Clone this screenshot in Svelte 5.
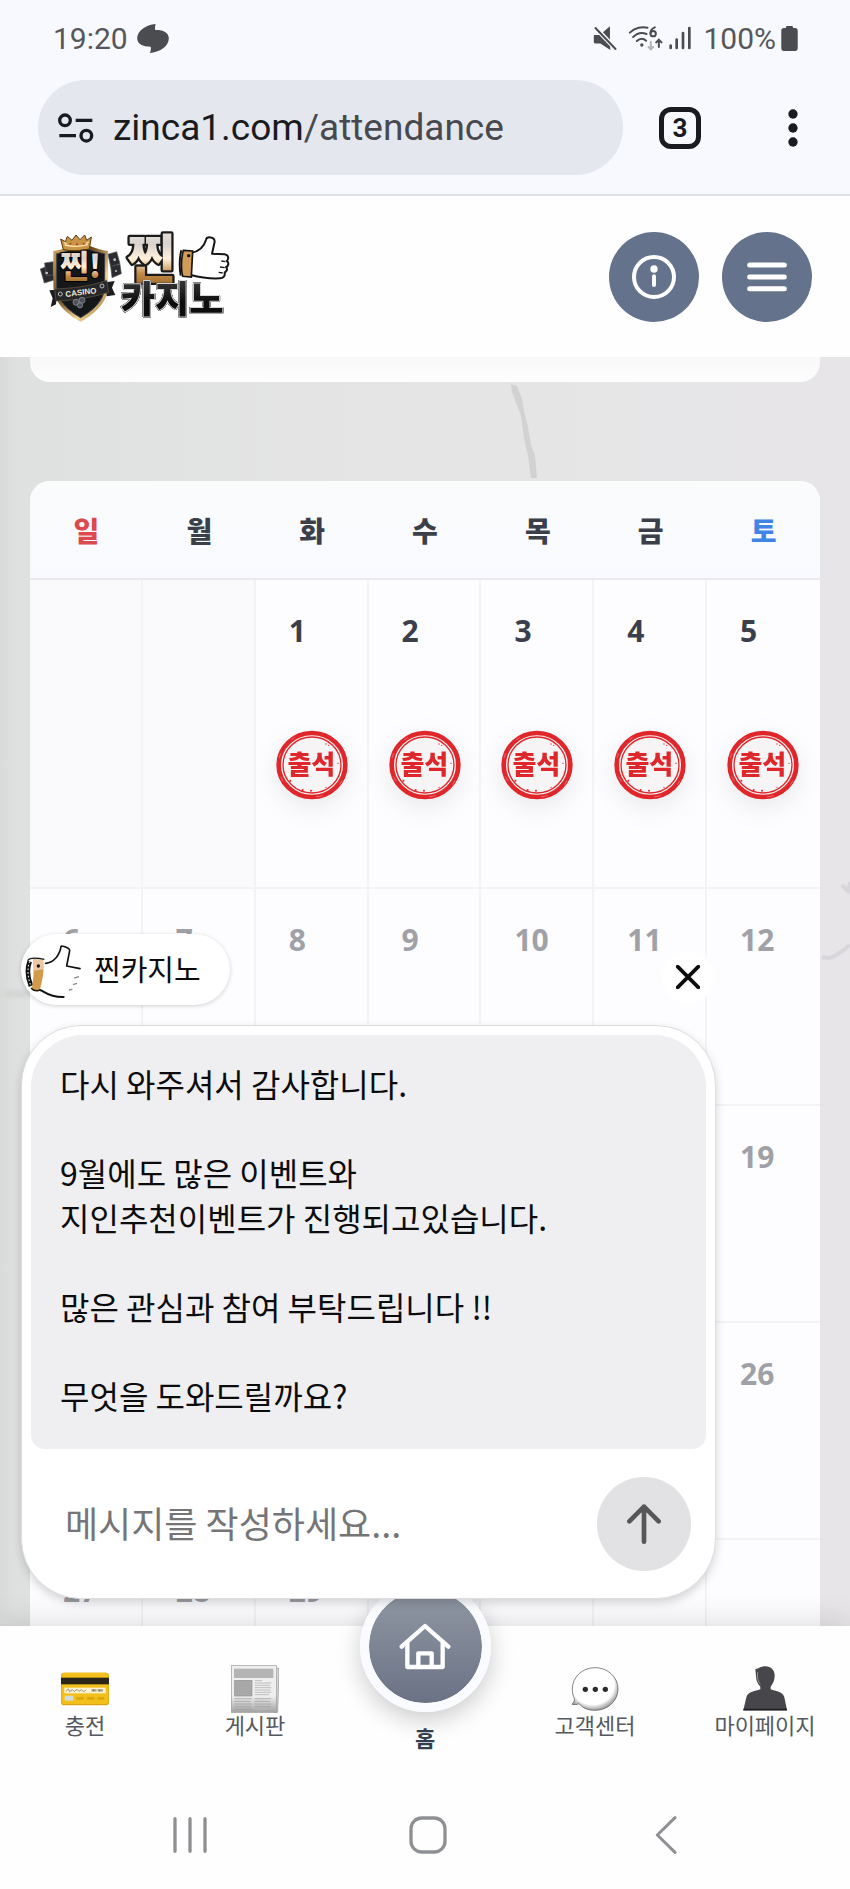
<script>
  const days = ['일', '월', '화', '수', '목', '금', '토']

  // null = blank day before the 1st / after the 30th
  const weeks = [
    [null, null, 1, 2, 3, 4, 5],
    [6, 7, 8, 9, 10, 11, 12],
    [13, 14, 15, 16, 17, 18, 19],
    [20, 21, 22, 23, 24, 25, 26],
    [27, 28, 29, 30, null, null, null]
  ]

  const checkedUntil = 5

  const messages = [
    ['다시 와주셔서 감사합니다.'],
    ['9월에도 많은 이벤트와', '지인추천이벤트가 진행되고있습니다.'],
    ['많은 관심과 참여 부탁드립니다 !!'],
    ['무엇을 도와드릴까요?']
  ]

  let open = true
  let draft = ''

  const closeChat = () => open = false
  const send = () => draft = ''
</script>

<div class="phone">
  <div class="status">
    <span class="clock">19:20</span>
    <svg class="blob" viewBox="0 0 96 88" width="32" height="29">
      <path d="M56 0c-2 8-3 13-1 18 22-1 39 6 41 24 1 26-28 44-58 46 4-8 4-13 3-19C17 69 1 61 0 45-1 22 25 2 56 0z" fill="#4a4c50" />
    </svg>
    <div class="status-right">
      <svg viewBox="0 0 72 76" width="24" height="25">
        <path d="M2 27h18L51 1v42L20 27l32 28v18L22 53H7c-4 0-5-2-5-6z" fill="#4a4c50" />
        <path d="M4 2l66 69" stroke="#f8f9ff" stroke-width="14" />
        <path d="M7 6l61 64" stroke="#4a4c50" stroke-width="6" stroke-linecap="round" />
      </svg>
      <svg class="wifi" viewBox="0 0 104 78" width="35" height="26">
        <g fill="none" stroke="#4a4c50" stroke-width="6" stroke-linecap="round">
          <path d="M5 23C20 8 42 4 58 8" />
          <path d="M15 36c11-11 26-15 40-9" />
          <path d="M26 48c9-8 20-8 28-1" />
          <path d="M80 7c-10 4-13 10-13 17" />
          <circle cx="75" cy="26" r="8" />
          <path d="M92 66V46M84 52l8-8 8 8" />
          <path d="M68 50v22M61 66l7 7 7-7" stroke="#b3b5ba" />
        </g>
        <circle cx="41" cy="60" r="5" fill="#4a4c50" />
      </svg>
      <svg class="signal" viewBox="0 0 66 70" width="22" height="24">
        <path d="M5 58v7M23 40v25M42 20v45M61 5v60" stroke="#4a4c50" stroke-width="8" stroke-linecap="round" />
      </svg>
      <span>100%</span>
      <svg class="battery" viewBox="0 0 50 76" width="17" height="25">
        <path d="M14 6c0-4 2-6 5-6h12c3 0 5 2 5 6h6c5 0 8 3 8 8v54c0 5-3 8-8 8H8c-5 0-8-3-8-8V14c0-5 3-8 8-8z" fill="#4a4c50" />
      </svg>
    </div>
  </div>

  <div class="browser">
    <div class="url">
      <svg viewBox="0 0 108 90" width="36" height="30" fill="none" stroke="#1a1b20" stroke-width="10">
        <circle cx="21" cy="22" r="16" />
        <path d="M53 22h50M4 68h50" />
        <circle cx="85" cy="68" r="16" />
      </svg>
      <span>zinca1.com<i>/attendance</i></span>
    </div>
    <button class="tabs" aria-label="탭">3</button>
    <button class="more" aria-label="메뉴">
      <svg viewBox="0 0 30 114" width="10" height="38" fill="#1a1b20">
        <circle cx="15" cy="15" r="14" />
        <circle cx="15" cy="57" r="14" />
        <circle cx="15" cy="99" r="14" />
      </svg>
    </button>
  </div>

  <header>
    <a href="/" class="logo" aria-label="찐카지노">
      <svg viewBox="54 0 576 384" width="192" height="128">
        <defs>
          <linearGradient id="gold" x1="0" y1="0" x2="0" y2="1">
            <stop offset="0" stop-color="#f4f0ec" />
            <stop offset=".35" stop-color="#d9d2cd" />
            <stop offset=".55" stop-color="#fff1dc" />
            <stop offset=".75" stop-color="#c08a45" />
            <stop offset="1" stop-color="#8e5b1f" />
          </linearGradient>
          <linearGradient id="rim" x1="0" y1="0" x2="1" y2="1">
            <stop offset="0" stop-color="#e0b46a" />
            <stop offset=".4" stop-color="#6b4718" />
            <stop offset=".7" stop-color="#f6d692" />
            <stop offset="1" stop-color="#7a521d" />
          </linearGradient>
          <linearGradient id="ink" x1="0" y1="0" x2="0" y2="1">
            <stop offset="0" stop-color="#4b4b4d" />
            <stop offset=".6" stop-color="#0d0d0e" />
          </linearGradient>
        </defs>
        <!-- cards behind the shield -->
        <g fill="#2a2b2f" stroke="#55565b" stroke-width="2">
          <path d="M61 168l30-12 14 44-32 10z" />
          <path d="M74 150l26-4v40l-22 2z" />
          <path d="M264 124l26-8 10 36-28 10z" />
          <path d="M272 160l28-6 4 28-28 12z" />
        </g>
        <g fill="#c9c9c9">
          <circle cx="80" cy="180" r="4" />
          <circle cx="284" cy="140" r="4" />
          <circle cx="288" cy="174" r="3" />
        </g>
        <!-- shield -->
        <path d="M182 84c-30 18-54 26-82 30v104c0 50 40 84 82 108 42-24 82-58 82-108V114c-28-4-52-12-82-30z" fill="url(#rim)" />
        <path d="M182 96c-26 15-48 22-72 26v98c0 42 34 72 72 94 38-22 72-52 72-94v-98c-24-4-46-11-72-26z" fill="#15171b" stroke="#41434a" stroke-width="3" />
        <path d="M122 78l14 8 6-16 14 12 12-16 12 14 14-14 6 16 14-10-6 36c-26 6-54 7-78 2z" fill="#c89445" stroke="#5b3a10" stroke-width="3" />
        <path d="M134 96c24 6 46 5 70-1M132 88l8 6M206 86l-8 6" fill="none" stroke="#fbe3ae" stroke-width="4" />
        <g fill="#a8402c">
          <circle cx="151" cy="92" r="3" />
          <circle cx="171" cy="94" r="3" />
          <circle cx="191" cy="92" r="3" />
        </g>
        <text x="120" y="196" class="badge">찐!</text>
        <path d="M88 232l24-2-4 44-16 8 6-26zM258 208l26-4-8 20 10 22-26 4z" fill="#1c1d20" />
        <path d="M104 228c54-2 104-8 156-26l6 36c-52 16-104 24-158 26z" fill="#26272b" stroke="#6b5a3c" stroke-width="2" />
        <text x="136" y="246" class="casino" transform="rotate(-7 184 236)">CASINO</text>
        <g fill="none" stroke="#bdbdbd" stroke-width="3">
          <circle cx="121" cy="243" r="6" />
          <circle cx="246" cy="219" r="6" />
        </g>
        <g fill="#4d5057" stroke="#9b9da3" stroke-width="2">
          <circle cx="168" cy="268" r="9" />
          <circle cx="186" cy="262" r="9" />
          <circle cx="180" cy="277" r="8" />
        </g>
        <!-- wordmark -->
        <text x="322" y="194" class="jjin">찐</text>
        <text x="302" y="300" class="kajino">카지노</text>
        <path d="M512 120c24-4 40-18 46-40 2-10 26-10 26 6l-8 36 38 2c14 2 12 16 6 20 8 4 6 16-2 18 6 6 2 14-4 16 2 10-4 18-14 18-38 2-58-2-88-10z" fill="#fff" stroke="#161616" stroke-width="6" stroke-linejoin="round" />
        <path d="M604 144l12 2M600 162l14 2M596 178l12 2" stroke="#161616" stroke-width="4" />
        <path d="M490 112l28 2-4 78-26-2c-6-26-4-54 2-78z" fill="#cf9c5a" stroke="#161616" stroke-width="5" />
        <path d="M484 112c-6 24-6 50-2 76" fill="none" stroke="#161616" stroke-width="6" />
        <circle cx="506" cy="128" r="5" fill="#161616" />
      </svg>
    </a>
    <button class="round" aria-label="안내">
      <svg viewBox="0 0 132 132" width="44" height="44">
        <circle cx="66" cy="66" r="60" fill="none" stroke="#fff" stroke-width="12" />
        <circle cx="66" cy="42" r="11" fill="#fff" />
        <path d="M66 64v26" stroke="#fff" stroke-width="12" stroke-linecap="round" />
      </svg>
    </button>
    <button class="round" aria-label="전체 메뉴">
      <svg viewBox="0 0 120 90" width="40" height="30">
        <path d="M8 9h104M8 45h104M8 80h104" stroke="#fff" stroke-width="15" stroke-linecap="round" />
      </svg>
    </button>
  </header>

  <main>
    <div class="scroll">
      <svg class="crack" viewBox="0 0 30 100" width="30" height="100">
        <path d="M1 1l6 2 5 13 2 12 4 16 3 18 4 10 2 23h-6l-3-22-4-18-3-22-6-16-3-8z" fill="#d2d2d2" />
      </svg>
      <svg class="vein" viewBox="0 0 30 90" width="30" height="90">
        <path d="M22 8l6 6 2-9M2 80c10 3 14-2 20-6l8-6" fill="none" stroke="#d8d6da" stroke-width="4" />
      </svg>
      <div class="smudge"></div>

      <section class="card-end"></section>

      <table>
        <thead>
          <tr>
            {#each days as day, i}
              <th class:sun={i === 0} class:sat={i === 6}>{day}</th>
            {/each}
          </tr>
        </thead>
        <tbody>
          {#each weeks as week, w}
            <tr class:stamped={w === 0}>
              {#each week as date}
                <td class:blank={w === 0 && !date} class:checked={date && date <= checkedUntil}>
                  {#if date}
                    <span class="date">{date}</span>
                    {#if date <= checkedUntil}
                      <svg class="stamp" viewBox="0 0 216 210" width="72" height="70">
                        <ellipse cx="108" cy="105" rx="100" ry="96" fill="#f6f4f4" stroke="#df262b" stroke-width="14" />
                        <ellipse cx="108" cy="105" rx="87" ry="84" fill="none" stroke="#df262b" stroke-width="4" />
                        <g fill="#df262b">
                          <circle cx="150" cy="42" r="2" />
                          <circle cx="158" cy="46" r="2" />
                          <circle cx="43" cy="152" r="3" />
                          <circle cx="80" cy="180" r="3" />
                          <circle cx="105" cy="182" r="3" />
                          <circle cx="150" cy="172" r="2" />
                          <circle cx="186" cy="100" r="2" />
                        </g>
                        <path d="M14 70l-5 14M14 140l8 14M198 152l-8 12M120 201l20-4M56 22l-10 8" stroke="#f08a8c" stroke-width="2" />
                        <text x="106" y="131" text-anchor="middle">출석</text>
                      </svg>
                    {/if}
                  {/if}
                </td>
              {/each}
            </tr>
          {/each}
        </tbody>
      </table>
    </div>

    {#if open}
      <div class="chat">
        <div class="chat-top">
          <div class="name">
            <svg viewBox="0 0 180 180" width="60" height="60">
              <path d="M62 70c24-2 40-22 46-50 2-6 28 0 26 8l-8 52 38 6c6 14 4 30-6 46-6 20-18 34-30 42-30 2-46-4-62-18z" fill="#fff" />
              <path d="M62 70c24-2 42-24 46-50 1-5 27 4 26 12l-9 46 40 8" fill="none" stroke="#111" stroke-width="5" stroke-linecap="round" stroke-linejoin="round" />
              <path d="M44 150c12 0 22 22 72 21" fill="none" stroke="#111" stroke-width="6" stroke-linecap="round" />
              <path d="M148 114l14-4M144 134l12-4M132 150l10-2" stroke="#888" stroke-width="4" />
              <path d="M14 64c-8 22-6 50 4 74" fill="none" stroke="#111" stroke-width="14" />
              <path d="M14 64c-8 22-6 50 4 74" fill="none" stroke="#fff" stroke-width="3" stroke-dasharray="5 6" />
              <path d="M24 58l30 2c4 28 0 56-10 92-6 4-20 2-24-4 6-32 8-60 4-90z" fill="#d49a4c" />
              <path d="M24 58l30 2 1 28-29 4z" fill="#ecc9a4" />
              <path d="M8 62c6-10 30-8 50-4M18 144c8 10 24 10 28 4" fill="none" stroke="#111" stroke-width="4" />
              <circle cx="40" cy="78" r="5" fill="#111" />
            </svg>
            <span>찐카지노</span>
          </div>
          <button class="close" aria-label="닫기" on:click={closeChat}>
            <svg viewBox="0 0 72 72" width="24" height="24">
              <path d="M5 5l62 62M67 5L5 67" stroke="#0c0c0e" stroke-width="11" stroke-linecap="round" />
            </svg>
          </button>
        </div>
        <div class="box">
          <div class="messages">
            {#each messages as lines}
              <p>
                {#each lines as line}
                  <span>{line}</span>
                {/each}
              </p>
            {/each}
          </div>
          <form on:submit|preventDefault={send}>
            <input type="text" aria-label="메시지" placeholder="메시지를 작성하세요..." bind:value={draft} />
            <button class="send" aria-label="보내기">
              <svg viewBox="0 0 102 120" width="34" height="40" fill="none" stroke="#57575a" stroke-width="14" stroke-linecap="round" stroke-linejoin="round">
                <path d="M51 113V8M7 52L51 8l44 44" />
              </svg>
            </button>
          </form>
        </div>
      </div>
    {/if}
  </main>

  <nav class="tabbar">
    <a href="/deposit">
      <svg viewBox="0 0 144 144" width="48" height="48">
        <rect x="0" y="23" width="144" height="98" rx="9" fill="#d9a512" />
        <rect x="2" y="23" width="140" height="94" rx="8" fill="#f3c01b" />
        <rect x="0" y="38" width="144" height="20" fill="#2b2618" />
        <rect x="10" y="68" width="124" height="17" fill="#fbf3d4" />
        <path d="M14 80l8-8 4 8 8-6 6 6 8-7 6 6 7-5 6 6 8-5" fill="none" stroke="#6f664a" stroke-width="2" />
        <path d="M92 76h14M110 76h16" stroke="#7c745c" stroke-width="7" stroke-dasharray="3 1" />
        <rect x="11" y="92" width="26" height="15" rx="3" fill="#d5dbd8" />
        <path d="M46 100h22M78 100h22M110 100h20" stroke="#dba70f" stroke-width="8" />
      </svg>
      <span>충전</span>
    </a>
    <a href="/board">
      <svg viewBox="0 0 144 144" width="48" height="48">
        <defs>
          <linearGradient id="paper" x1="0" y1="0" x2="0" y2="1">
            <stop offset=".65" stop-color="#efefef" />
            <stop offset="1" stop-color="#a2a2a2" />
          </linearGradient>
        </defs>
        <path d="M132 10h12l-4 132h-10z" fill="#d5d5d5" stroke="#8d8d8d" stroke-width="2" />
        <rect x="1" y="2" width="136" height="140" fill="url(#paper)" stroke="#9a9a9a" stroke-width="2" />
        <rect x="9" y="11" width="118" height="28" fill="#b4b4b4" />
        <rect x="11" y="46" width="52" height="47" fill="#a8a8a8" stroke="#8f8f8f" stroke-width="2" />
        <path d="M71 47h22M71 54h50M71 61h46M71 68h50M71 75h48M71 82h50M71 89h44" stroke="#a5a5a5" stroke-width="2" />
        <path d="M10 101h52M10 109h48M10 117h52M10 125h50M10 133h52M71 101h50M71 109h46M71 117h50M71 125h48" stroke="#9a9a9a" stroke-width="2" />
      </svg>
      <span>게시판</span>
    </a>
    <a href="/" class="home">
      <div class="home-circle">
        <svg viewBox="0 0 156 144" width="52" height="48" fill="none" stroke="#fff" stroke-width="13" stroke-linecap="round" stroke-linejoin="round">
          <path d="M8 71L78 9l70 62" />
          <path d="M25 60v72h106V60" />
          <path d="M58 130V91h40v39" />
        </svg>
      </div>
      <span>홈</span>
    </a>
    <a href="/support">
      <svg viewBox="0 0 144 144" width="48" height="48">
        <defs>
          <radialGradient id="bubble" cx=".45" cy=".4" r=".58">
            <stop offset=".8" stop-color="#fff" />
            <stop offset="1" stop-color="#a9a9a9" />
          </radialGradient>
        </defs>
        <path d="M72 8c39 0 69 29 69 64s-30 64-69 64c-20 0-36-6-48-20-6 3-12 3-21 2 6-6 8-11 7-18-4-8-6-17-6-28C4 37 33 8 72 8z" fill="url(#bubble)" stroke="#4b4b4b" stroke-width="2" />
        <g fill="#2b2b2e">
          <circle cx="43" cy="73" r="8" />
          <circle cx="73" cy="73" r="8" />
          <circle cx="103" cy="73" r="8" />
        </g>
      </svg>
      <span>고객센터</span>
    </a>
    <a href="/mypage">
      <svg viewBox="0 0 144 144" width="48" height="48">
        <path d="M43 12c8 0 12-8 30-8 18 0 29 13 28 30-1 14-5 22-12 31v8c8 5 36 4 41 24l8 39H7l9-39c5-20 34-19 42-24v-8c-8-8-13-18-13-32z" fill="#47464a" />
        <path d="M50 22c-2 16 2 30 8 36" fill="none" stroke="#98989c" stroke-width="3" />
        <path d="M7 134h131" stroke="#1f1f22" stroke-width="5" />
      </svg>
      <span>마이페이지</span>
    </a>
  </nav>

  <div class="system">
    <button aria-label="최근 앱">
      <svg viewBox="0 0 108 108" width="36" height="36">
        <path d="M9 5v98M54 5v98M99 5v98" stroke="#8f9093" stroke-width="10" stroke-linecap="round" />
      </svg>
    </button>
    <button aria-label="홈 화면">
      <svg viewBox="0 0 114 114" width="38" height="38">
        <rect x="6" y="6" width="102" height="102" rx="32" fill="none" stroke="#8f9093" stroke-width="10" />
      </svg>
    </button>
    <button aria-label="뒤로">
      <svg viewBox="0 0 66 114" width="22" height="38">
        <path d="M60 5L7 57l53 52" fill="none" stroke="#8f9093" stroke-width="9" stroke-linecap="round" stroke-linejoin="round" />
      </svg>
    </button>
  </div>
</div>

<style>
  :global(body) {
    margin: 0;
    background: #fefefe;
  }

  .phone {
    display: flex;
    flex-direction: column;
    height: 100vh;
    overflow: hidden;
    font-family: "Noto Sans CJK KR", "Noto Sans", sans-serif;
    color: #3b3f4a;
  }

  svg {
    display: block;
    flex: none;
  }

  button {
    display: flex;
    align-items: center;
    justify-content: center;
    flex: none;
    padding: 0;
    border: 0;
    background: none;
    font: inherit;
    cursor: pointer;
  }

  a {
    color: inherit;
    text-decoration: none;
  }

  .status {
    display: flex;
    align-items: center;
    height: 76px;
    padding: 0 52px 0 53px;
    background: #f8f9ff;
    font-family: Roboto, sans-serif;
    font-size: 30px;
    color: #55575b;
  }

  .blob {
    margin-left: 9px;
  }

  .status-right {
    display: flex;
    align-items: center;
    margin-left: auto;
  }

  .wifi {
    margin: 0 6px 0 11px;
  }

  .signal {
    margin-right: 12px;
  }

  .battery {
    margin-left: 5px;
  }

  .browser {
    display: flex;
    align-items: center;
    padding: 4px 37px 19px 38px;
    background: #f8f9ff;
    border-bottom: 2px solid #dfe1e8;
    color: #1a1b20;
  }

  .url {
    display: flex;
    align-items: center;
    gap: 19px;
    flex: 1;
    height: 95px;
    margin-right: 36px;
    padding-left: 20px;
    box-sizing: border-box;
    border-radius: 48px;
    background: #e4e7ed;
    font-family: Roboto, sans-serif;
    font-size: 37px;
  }

  .url i {
    font-style: normal;
    color: #47494f;
  }

  .tabs {
    width: 42px;
    height: 42px;
    margin-right: 72px;
    border: 5px solid #1a1b20;
    border-radius: 12px;
    font-family: Roboto, sans-serif;
    font-size: 26px;
    font-weight: 700;
    color: #1a1b20;
  }

  .more {
    width: 40px;
    height: 48px;
  }

  header {
    display: flex;
    align-items: center;
    gap: 23px;
    height: 161px;
    flex: none;
    padding: 0 38px;
    box-sizing: border-box;
    background: #fefefe;
  }

  .logo {
    margin-right: auto;
  }

  .badge, .jjin, .kajino {
    font-family: "Noto Sans CJK KR", sans-serif;
    font-weight: 900;
    paint-order: stroke;
    stroke-linejoin: round;
  }

  .badge {
    font-size: 94px;
    fill: url(#gold);
    stroke: #000;
    stroke-width: 6;
  }

  .casino {
    font-family: "Liberation Sans", sans-serif;
    font-size: 24px;
    font-weight: 700;
    fill: #efe6d2;
  }

  .jjin {
    font-size: 156px;
    fill: url(#gold);
    stroke: #1b1b1b;
    stroke-width: 14;
  }

  .kajino {
    font-size: 112px;
    fill: url(#ink);
    stroke: #d5d5d5;
    stroke-width: 6;
    filter: drop-shadow(0 0 2px #111) drop-shadow(0 0 2px #111);
  }

  .round {
    width: 90px;
    height: 90px;
    border-radius: 50%;
    background: #64728c;
  }

  main {
    position: relative;
    flex: 1;
    min-height: 0;
  }

  .scroll {
    position: relative;
    height: 100%;
    padding: 0 30px;
    box-sizing: border-box;
    overflow: hidden;
    background: linear-gradient(90deg, #d8dbd9 0, #dfe1e0 2%, #e5e5e5 50%, #e7e5e8 100%);
  }

  .crack {
    position: absolute;
    top: 26px;
    left: 60%;
  }

  .vein {
    position: absolute;
    top: 520px;
    right: 0;
  }

  .smudge {
    position: absolute;
    top: 634px;
    left: 4px;
    width: 26px;
    height: 6px;
    background: #d0d3d1;
    filter: blur(2px);
  }

  .card-end {
    height: 25px;
    margin-bottom: 99px;
    border-radius: 0 0 20px 20px;
    background: linear-gradient(#f8f8f9, #fdfdfe);
  }

  table {
    position: relative;
    width: 100%;
    table-layout: fixed;
    border-spacing: 0;
    border-radius: 20px 20px 0 0;
    background: #fdfdff;
    overflow: hidden;
  }

  th {
    height: 97px;
    padding: 0;
    border-bottom: 2px solid #e9e9ee;
    background: linear-gradient(#fafbfb, #f9faff);
    font-size: 28px;
    line-height: 36px;
    font-weight: 900;
  }

  .sun {
    color: #dc4a4d;
  }

  .sat {
    color: #4084e6;
  }

  td {
    height: 217px;
    padding: 33px 0 0 33px;
    box-sizing: border-box;
    border-right: 2px solid #f3f3f7;
    border-bottom: 2px solid #f3f3f7;
    vertical-align: top;
    color: #9fa1a7;
  }

  td:last-child {
    border-right: 0;
  }

  .stamped td {
    height: 309px;
  }

  .blank {
    background: #fafafc;
  }

  .checked {
    color: #3b3f4a;
  }

  .date {
    display: block;
    font-family: "Noto Sans", sans-serif;
    font-size: 30px;
    line-height: 36px;
    font-weight: 700;
  }

  .stamp {
    margin: 81px 0 0 -13px;
    filter: drop-shadow(0 8px 12px rgba(0, 0, 0, .08));
  }

  .stamp text {
    font-family: "Noto Sans CJK KR", sans-serif;
    font-size: 78px;
    font-weight: 900;
    fill: #df262b;
  }

  .chat {
    position: absolute;
    z-index: 2;
    left: 21px;
    right: 134px;
    bottom: 27px;
  }

  .chat-top {
    display: flex;
    align-items: flex-end;
    justify-content: space-between;
    margin-bottom: 20px;
  }

  .name {
    display: flex;
    align-items: center;
    gap: 9px;
    height: 71px;
    padding: 0 29px 0 4px;
    border-radius: 36px;
    background: #fff;
    box-shadow: 0 1px 4px rgba(0, 0, 0, .18);
    font-size: 29px;
    color: #0c0c0e;
  }

  .name span {
    padding-bottom: 4px;
  }

  .close {
    width: 56px;
    height: 56px;
    border-radius: 50%;
    background: radial-gradient(#fff 60%, transparent 72%);
  }

  .box {
    padding: 9px 9px 0;
    border: 1px solid #dedee1;
    border-radius: 60px;
    background: #fff;
    box-shadow: 0 4px 10px rgba(0, 0, 0, .16);
  }

  .messages {
    display: flex;
    flex-direction: column;
    gap: 44px;
    padding: 26px 29px 31px;
    border-radius: 52px 52px 14px 14px;
    background: #efeff1;
    font-size: 32px;
    line-height: 45px;
    color: #0c0c0e;
  }

  p {
    margin: 0;
  }

  p span {
    display: block;
  }

  form {
    display: flex;
    align-items: center;
    height: 149px;
    padding: 0 15px 0 34px;
  }

  input {
    flex: 1;
    min-width: 0;
    padding: 0 0 4px;
    border: 0;
    outline: 0;
    background: none;
    font: inherit;
    font-size: 36px;
    color: #0c0c0e;
  }

  input::placeholder {
    color: #757578;
    opacity: 1;
  }

  .send {
    width: 94px;
    height: 94px;
    border-radius: 50%;
    background: #e2e2e5;
  }

  .tabbar {
    position: relative;
    z-index: 1;
    display: flex;
    flex: none;
    height: 154px;
    padding-top: 39px;
    box-sizing: border-box;
    background: #fefefe;
    box-shadow: 0 -2px 30px rgba(0, 0, 0, .14);
    font-size: 22px;
    line-height: 22px;
    color: #55595f;
  }

  .tabbar a {
    display: flex;
    flex: 1;
    flex-direction: column;
    align-items: center;
  }

  .home {
    font-weight: 700;
    color: #333f4e;
  }

  .home-circle {
    display: flex;
    align-items: center;
    justify-content: center;
    width: 131px;
    height: 131px;
    margin: -84px 0 14px;
    box-sizing: border-box;
    border: 9px solid #f9fbff;
    border-radius: 50%;
    background: linear-gradient(#939ba6, #686f82) border-box;
    background-clip: padding-box;
    box-shadow: 0 8px 24px rgba(0, 0, 0, .2);
  }

  .system {
    position: relative;
    z-index: 1;
    display: flex;
    align-items: center;
    justify-content: center;
    gap: 190px;
    height: 109px;
    flex: none;
    padding-left: 6px;
    background: #fefefe;
  }

  .system button {
    width: 48px;
    height: 48px;
  }
</style>
